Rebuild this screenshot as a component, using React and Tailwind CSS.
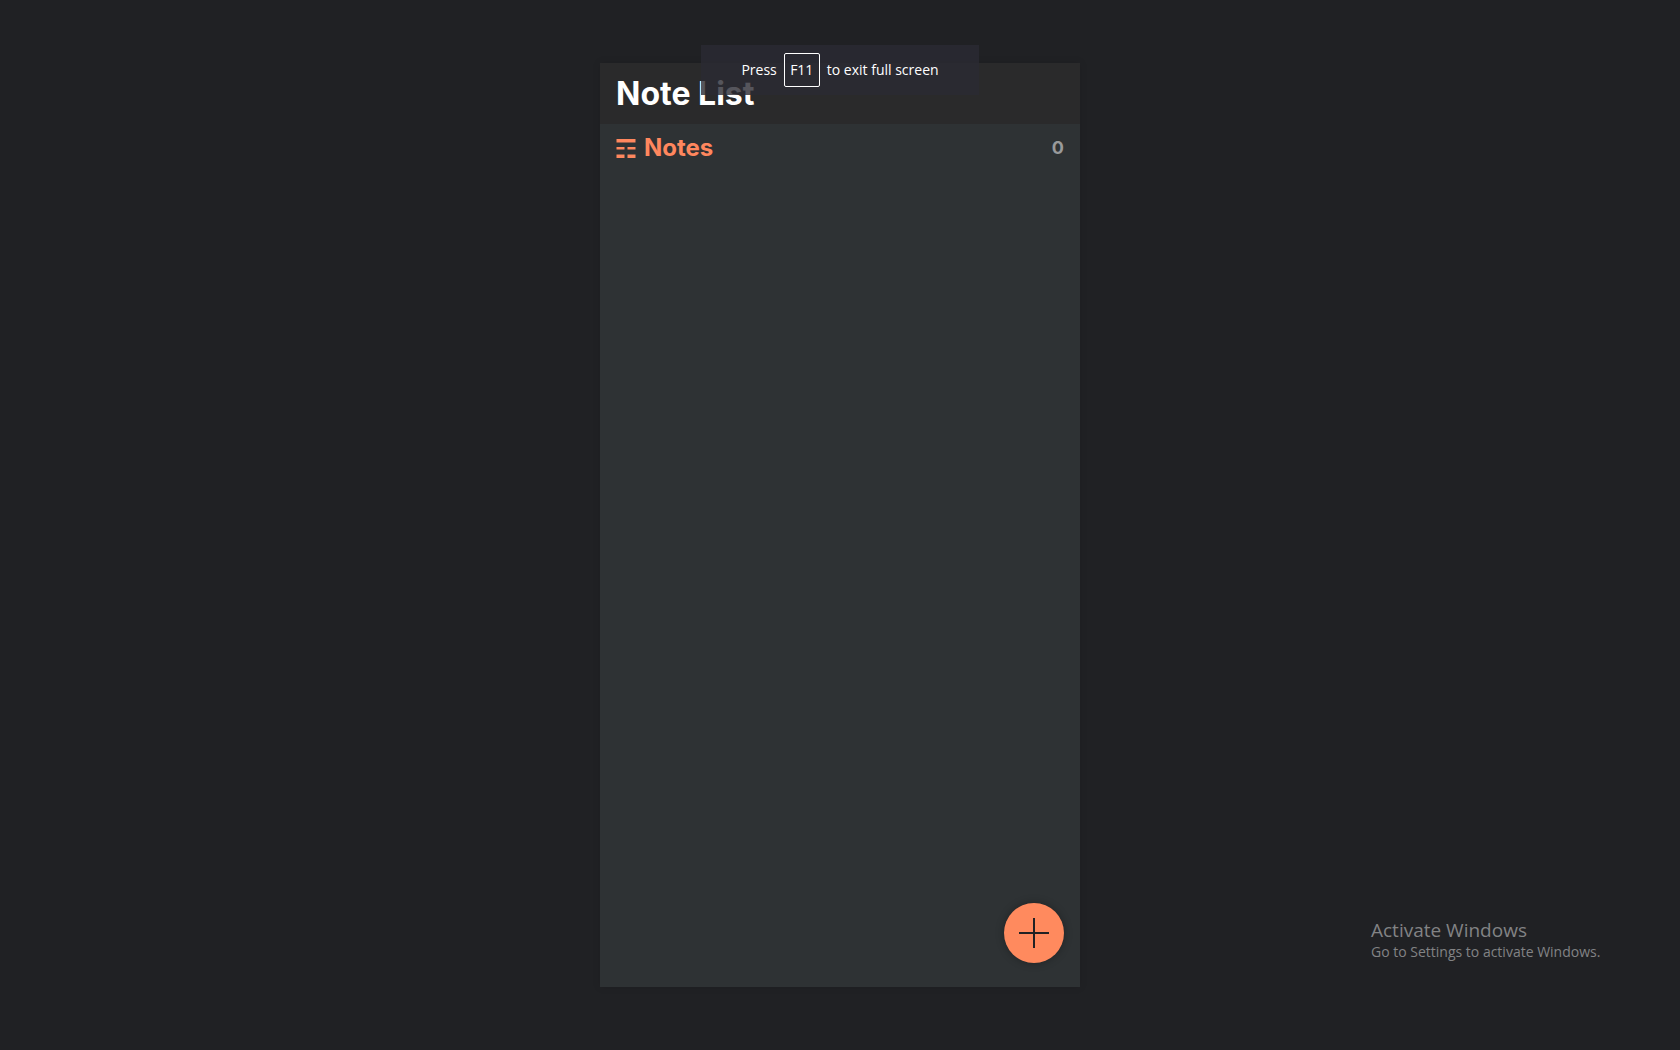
function NotesIcon() {
  return (
    <svg className="h-5 w-5" viewBox="0 0 20 20" fill="currentColor" aria-hidden="true">
      <path d="M0.5 1h19v3.5h-19zM0.5 9h8v2.5h-8zM11.5 9h8v2.5h-8zM0.5 16.5h8v3.5h-8zM11.5 16.5h8v3.5h-8z" />
    </svg>
  );
}

function FullscreenToast() {
  return (
    <div
      role="status"
      className="absolute top-[45px] left-1/2 flex h-[50px] w-[278px] -translate-x-1/2 items-center justify-center gap-[7px] bg-[#2a2b33]/80 font-['Open_Sans',sans-serif] text-sm whitespace-nowrap text-white"
    >
      <span>Press</span>
      <kbd className="flex h-[34px] w-9 items-center justify-center rounded-xs border border-white font-['Open_Sans',sans-serif] text-sm">
        F11
      </kbd>
      <span>to exit full screen</span>
    </div>
  );
}

export default function App() {
  return (
    <div className="relative flex min-h-screen items-center justify-center bg-[#202124] font-[Inter,sans-serif]">
      <main className="flex h-[88vh] w-full max-w-[480px] flex-col bg-[#2e3234] shadow-[0_0_8px_rgba(0,0,0,0.1)]">
        <header className="flex h-[61px] items-center bg-[#2a2a2b] px-4">
          <h1 className="text-[32px] leading-10 font-bold text-white">Note List</h1>
        </header>
        <section className="flex items-center justify-between px-4 py-2">
          <h2 className="flex items-center gap-2 text-2xl font-bold text-[#ff875e]">
            <NotesIcon />
            Notes
          </h2>
          <span className="text-lg font-bold text-[#999a9b]">0</span>
        </section>
        <button
          type="button"
          aria-label="Add note"
          className="mt-auto mr-4 mb-6 flex size-15 items-center justify-center self-end rounded-full bg-[#ff8a5e] text-[#202124] shadow-[0_0_8px_rgba(0,0,0,0.3)]"
        >
          <svg className="size-[30px]" viewBox="0 0 30 30" stroke="currentColor" strokeWidth="2" aria-hidden="true">
            <path d="M15 0v30M0 15h30" />
          </svg>
        </button>
      </main>
      <FullscreenToast />
      <aside className="absolute right-[72px] bottom-[88px] w-[237px] font-['Open_Sans',sans-serif] whitespace-nowrap text-[#828385]">
        <p className="text-[19px] leading-6">Activate Windows</p>
        <p className="text-sm leading-5">Go to Settings to activate Windows.</p>
      </aside>
    </div>
  );
}
